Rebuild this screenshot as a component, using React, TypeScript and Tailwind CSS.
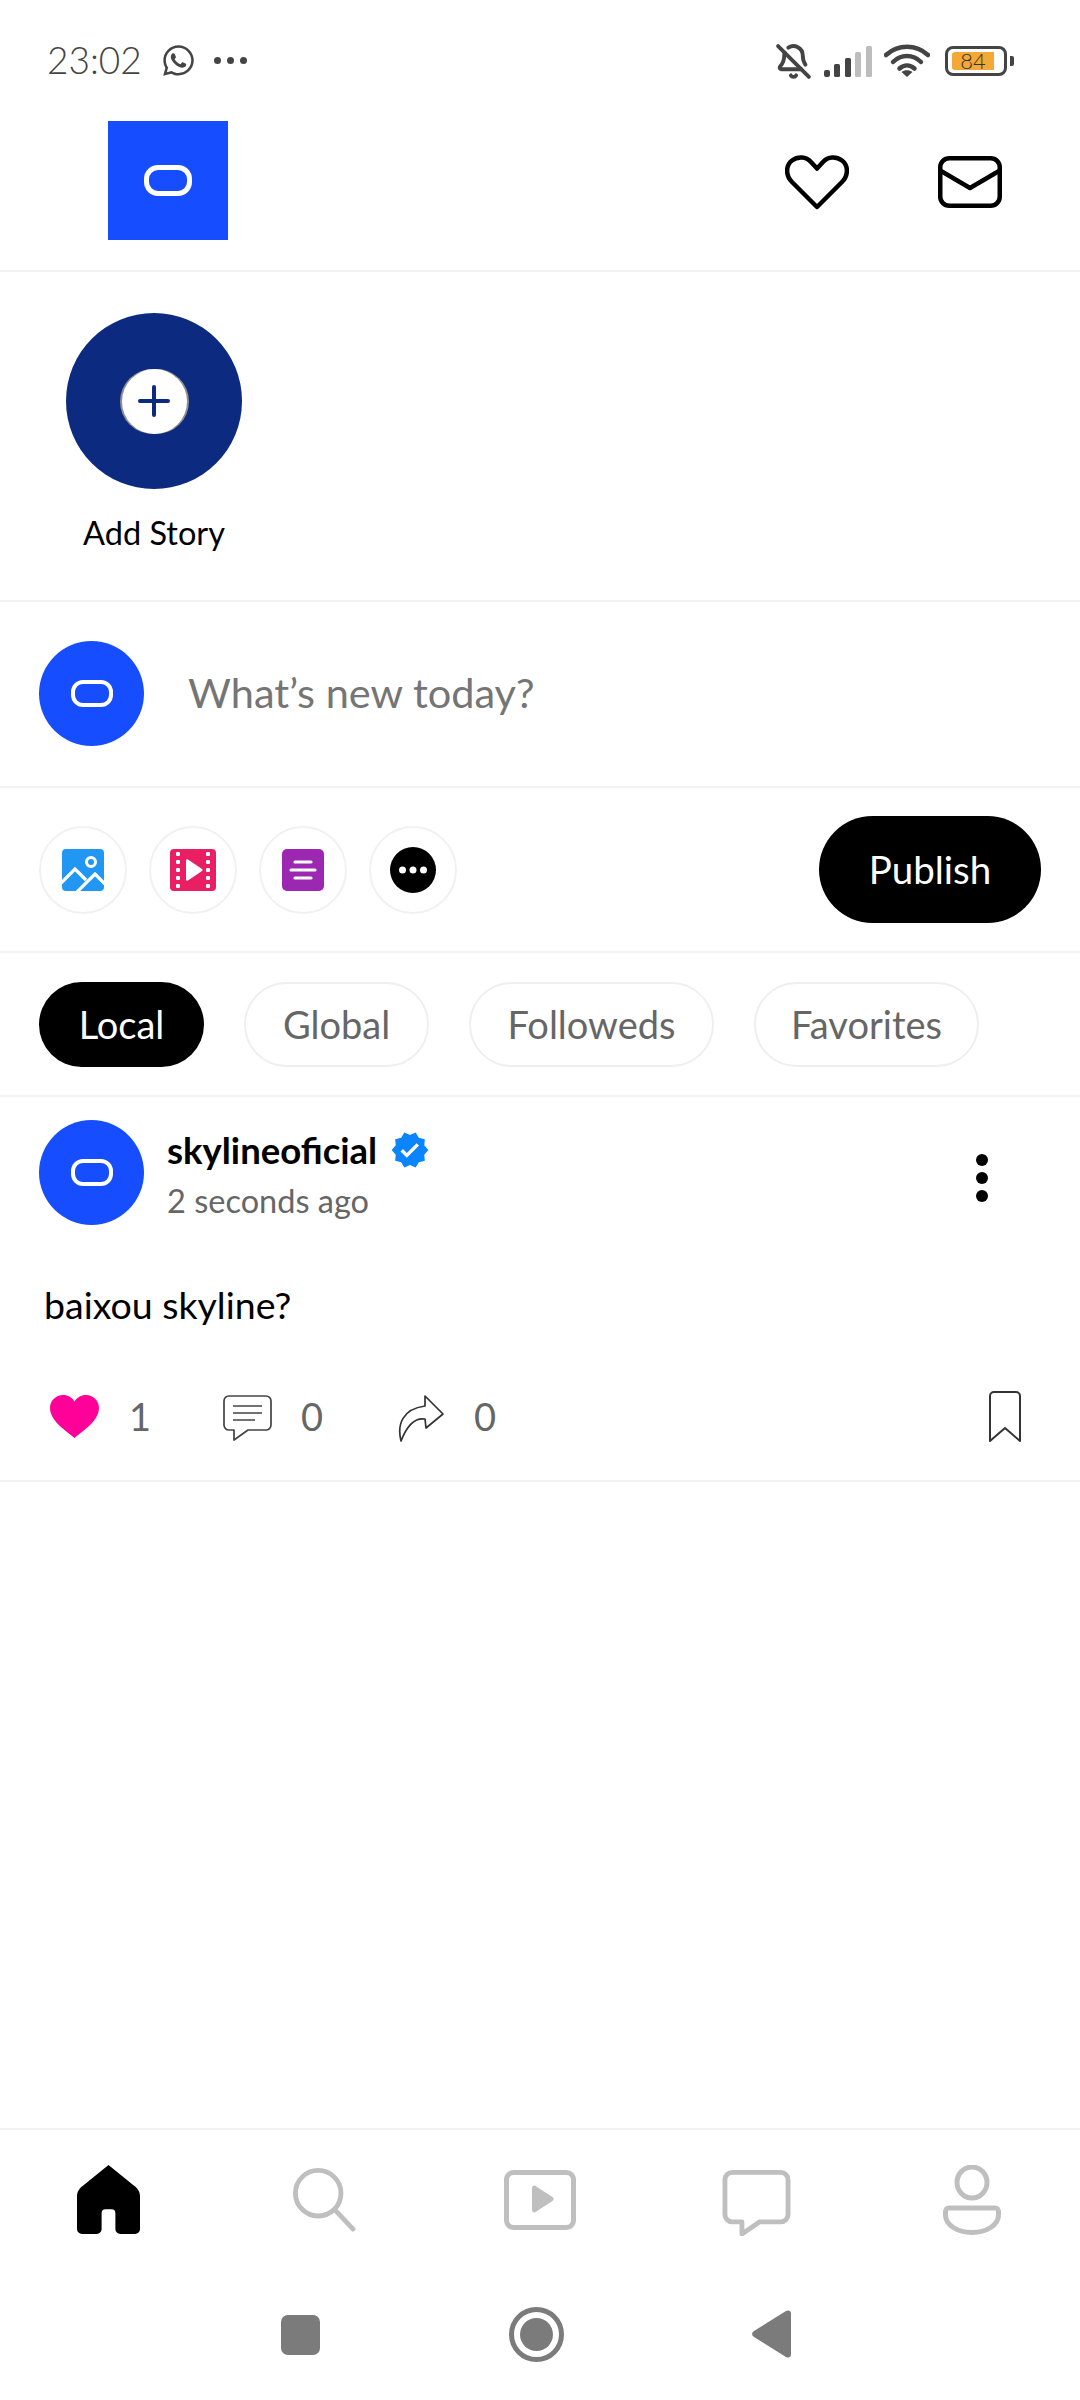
import { BellOff } from 'lucide-react';
import { FaWhatsapp } from 'react-icons/fa';
import { MdVerified } from 'react-icons/md';

const font = "font-['Lato','Noto_Sans',sans-serif]";

function Divider() {
  return <div className="h-[2px] bg-[#f3f3f3]" />;
}

function LogoMark({ big }: { big?: boolean }) {
  return big ? (
    <div className="w-[48px] h-[31px] rounded-[14px] border-[5px] border-white" />
  ) : (
    <div className="w-[42px] h-[27px] rounded-[12px] border-[4px] border-white" />
  );
}

function Avatar() {
  return (
    <div className="w-[105px] h-[105px] rounded-full bg-[#154dff] flex items-center justify-center shrink-0">
      <LogoMark />
    </div>
  );
}

function StatusBar() {
  return (
    <div className="h-[121px] flex items-start pt-[43px] pl-[47px] pr-[66px] text-[#444]">
      <span className="text-[37px] leading-[34px] font-light w-[94px]">23:02</span>
      <FaWhatsapp className="ml-[20px] w-[35px] h-[35px]" />
      <div className="ml-[18px] mt-[14px] flex gap-[6px]">
        <div className="w-[7px] h-[7px] rounded-full bg-[#444]" />
        <div className="w-[7px] h-[7px] rounded-full bg-[#444]" />
        <div className="w-[7px] h-[7px] rounded-full bg-[#444]" />
      </div>
      <div className="ml-auto flex items-center gap-[12px] h-[36px]">
        <BellOff className="w-[37px] h-[37px]" strokeWidth={2.5} />
        <svg width="48" height="32" viewBox="0 0 48 32">
          <rect x="0" y="25" width="6" height="7" rx="2" fill="#444" />
          <rect x="10" y="19" width="6" height="13" rx="1.5" fill="#444" />
          <rect x="21" y="13" width="6" height="19" rx="1.5" fill="#444" />
          <rect x="31" y="7" width="6" height="25" rx="1.5" fill="#bdbdbd" />
          <rect x="42" y="1" width="6" height="31" rx="1.5" fill="#bdbdbd" />
        </svg>
        <svg width="46" height="34" viewBox="0 0 46 34" fill="none" stroke="#444" strokeWidth="4.5" strokeLinecap="round">
          <path d="M2 11C14 0 32 0 44 11" />
          <path d="M9 18C17 10 29 10 37 18" />
          <path d="M15.5 24.5C20 20.5 26 20.5 30.5 24.5" />
          <path d="M23 33l-5.5-5C20.5 25.5 25.5 25.5 28.5 28z" fill="#444" stroke="none" />
        </svg>
        <div className="flex items-center ml-[3px]">
          <div className="w-[62px] h-[30px] rounded-[8px] border-[3px] border-[#444] flex items-center pl-[4px]">
            <div className="w-[42px] h-[18px] rounded-l-[3px] bg-[#f4a836] flex items-center justify-center text-[22px] font-light leading-none text-[#333]">
              84
            </div>
          </div>
          <div className="ml-[3px] w-[4px] h-[10px] rounded-r-[2px] bg-[#444]" />
        </div>
      </div>
    </div>
  );
}

function TopBar() {
  return (
    <div className="h-[149px] flex items-start pl-[108px] pr-[78px]">
      <div className="w-[120px] h-[119px] bg-[#154dff] flex items-center justify-center">
        <LogoMark big />
      </div>
      <svg className="ml-auto mt-[33px]" width="64" height="56" viewBox="0 0 64 56" fill="none" stroke="#000" strokeWidth="4.5" strokeLinejoin="round">
        <path d="M32 53L7 28C0 21 1 11 7 6.500c6-4.500 14-4 19 1.500l6 6.500L38 8c5-5.500 13-6 19-1.500 6 4.500 7 14.500 0 21.500z" />
      </svg>
      <svg className="ml-[89px] mt-[35px]" width="64" height="52" viewBox="0 0 64 52" fill="none" stroke="#000" strokeWidth="4.5" strokeLinejoin="round">
        <rect x="2.25" y="2.25" width="59.5" height="47.5" rx="9" />
        <path d="M3 15l29 17 29-17" />
      </svg>
    </div>
  );
}

function StoryRow() {
  return (
    <div className="h-[328px] pt-[41px] pl-[66px]">
      <div className="w-[176px] flex flex-col items-center">
        <div className="w-[176px] h-[176px] rounded-full bg-[#0b2a80] flex items-center justify-center">
          <div className="w-[69px] h-[65px] rounded-full bg-[#8f8f8f] flex items-center justify-center">
            <div className="w-[65px] h-[65px] rounded-full bg-white flex items-center justify-center">
              <svg width="32" height="32" viewBox="0 0 32 32" stroke="#0b2a80" strokeWidth="4" strokeLinecap="round">
                <path d="M2 16h28M16 2v28" />
              </svg>
            </div>
          </div>
        </div>
        <span className="mt-[26px] text-[32.500px] leading-[36px] text-black whitespace-nowrap">Add Story</span>
      </div>
    </div>
  );
}

function Composer() {
  return (
    <div className="h-[184px] flex items-center pl-[39px] pb-[2px]">
      <Avatar />
      <span className="ml-[44px] text-[41.500px] text-[#757575] -mt-[2px]">What’s new today?</span>
    </div>
  );
}

function MediaButton({ children }: { children: React.ReactNode }) {
  return (
    <div className="w-[88px] h-[88px] rounded-full border-2 border-[#f1f1f1] flex items-center justify-center">
      {children}
    </div>
  );
}

function ActionsRow() {
  return (
    <div className="h-[163px] flex items-center pl-[39px] pr-[38px]">
      <div className="flex gap-[22px]">
        <MediaButton>
          <svg width="42" height="42" viewBox="0 0 42 42">
            <rect width="42" height="42" rx="4" fill="#2196f3" />
            <path d="M-1 34L13 20l11 11M14 44l19-19 10 10" fill="none" stroke="#fff" strokeWidth="3.2" />
            <circle cx="29" cy="13" r="4.5" fill="none" stroke="#fff" strokeWidth="3" />
          </svg>
        </MediaButton>
        <MediaButton>
          <svg width="46" height="42" viewBox="0 0 46 42">
            <rect width="46" height="42" rx="4" fill="#e91e63" />
            <path d="M16 11.5c0-1 1-1.600 2-1l14 9.500c.8.500.8 1.500 0 2l-14 9.500c-1 .6-2 0-2-1z" fill="#fff" />
            {[4, 12, 20, 28, 36].map((y) => (
              <g key={y} fill="#fff">
                <rect x="6" y={y - 1} width="4" height="4" rx="1" />
                <rect x="36" y={y - 1} width="4" height="4" rx="1" />
              </g>
            ))}
          </svg>
        </MediaButton>
        <MediaButton>
          <svg width="42" height="42" viewBox="0 0 42 42">
            <rect width="42" height="42" rx="5" fill="#9c27b0" />
            <path d="M13 13h16M9 21h24M13 29h16" stroke="#fff" strokeWidth="3.200" strokeLinecap="round" />
          </svg>
        </MediaButton>
        <MediaButton>
          <svg width="46" height="46" viewBox="0 0 46 46">
            <circle cx="23" cy="23" r="23" fill="#000" />
            <circle cx="12.500" cy="23" r="3.500" fill="#fff" />
            <circle cx="23" cy="23" r="3.500" fill="#fff" />
            <circle cx="33.500" cy="23" r="3.500" fill="#fff" />
          </svg>
        </MediaButton>
      </div>
      <div className="ml-auto mr-[1px] w-[222px] h-[107px] rounded-full bg-black text-white text-[38.500px] flex items-center justify-center">
        Publish
      </div>
    </div>
  );
}

function Tab({ label, active, w }: { label: string; active?: boolean; w: string }) {
  return (
    <div
      className={`h-[85px] rounded-full flex items-center justify-center text-[38px] ${w} ${
        active ? 'bg-black text-white' : 'border-2 border-[#efefef] text-[#666]'
      }`}
    >
      {label}
    </div>
  );
}

function Tabs() {
  return (
    <div className="h-[142px] flex items-center pl-[39px] gap-[40px]">
      <Tab label="Local" active w="w-[165px]" />
      <Tab label="Global" w="w-[185px]" />
      <Tab label="Followeds" w="w-[245px]" />
      <Tab label="Favorites" w="w-[225px]" />
    </div>
  );
}

function Post() {
  return (
    <div className="h-[383px] flex flex-col">
      <div className="flex pl-[39px] pr-[92px] pt-[23px]">
        <Avatar />
        <div className="ml-[23px] flex flex-col">
          <div className="flex items-center h-[56px] mt-[2px]">
            <span className="text-[36.500px] font-bold text-black leading-none">skylineoficial</span>
            <MdVerified className="ml-[13px] w-[40px] h-[40px] text-[#0a84ff]" />
          </div>
          <span className="text-[32.500px] leading-[38px] mt-[4px] text-[#666]">2 seconds ago</span>
        </div>
        <div className="ml-auto mt-[34px] flex flex-col gap-[6px]">
          <div className="w-[12px] h-[12px] rounded-full bg-black" />
          <div className="w-[12px] h-[12px] rounded-full bg-black" />
          <div className="w-[12px] h-[12px] rounded-full bg-black" />
        </div>
      </div>
      <p className="mt-[59px] pl-[44px] text-[37.500px] leading-[42px] text-black">baixou skyline?</p>
      <div className="mt-[66px] flex items-center h-[52px] pl-[50px] pr-[59px] text-[38px] text-[#666]">
        <svg className="-mt-[3px]" width="49" height="43" viewBox="0 0 49 43">
          <path d="M24.500 43C19 37.500 0 27 0 13 0 5.500 6 0 13 0c5 0 9 2.500 11.500 6.500C27 2.500 31 0 36 0c7 0 13 5.500 13 13 0 14-19 24.500-24.500 30z" fill="#ff0099" />
        </svg>
        <span className="ml-[30px] w-[19px] -mt-[3px]">1</span>
        <svg className="ml-[75px]" width="49" height="46" viewBox="0 0 49 46" fill="none" stroke="#444" strokeWidth="1.700" strokeLinejoin="round">
          <path d="M6 1h37a5 5 0 0 1 5 5v24a5 5 0 0 1-5 5H25l-14 10v-10H6a5 5 0 0 1-5-5V6a5 5 0 0 1 5-5z" />
          <path d="M10 11h29M10 18h29M10 25h22" />
        </svg>
        <span className="ml-[29px] w-[22px] -mt-[3px]">0</span>
        <svg className="ml-[75px]" width="46" height="47" viewBox="0 0 46 47" fill="none" stroke="#333" strokeWidth="1.700" strokeLinejoin="round">
          <path d="M27 1l18 18-17 14-1-9C15 22 8 33 3 46 -1 30 4 14 27 11z" />
        </svg>
        <span className="ml-[30px] w-[22px] -mt-[3px]">0</span>
        <svg className="ml-auto -mt-[3px]" width="32" height="51" viewBox="0 0 32 51" fill="none" stroke="#333" strokeWidth="2" strokeLinejoin="round">
          <path d="M5 1h22a4 4 0 0 1 4 4v45L16 37 1 50V5a4 4 0 0 1 4-4z" />
        </svg>
      </div>
    </div>
  );
}

function BottomNav() {
  return (
    <div className="grid grid-cols-5 h-[146px] pt-[35px] items-start justify-items-center">
      <svg width="63" height="69" viewBox="0 0 64 70">
        <path d="M32 0l26 21c4 3 6 6 6 11v33a5 5 0 0 1-5 5H44a5 5 0 0 1-5-5V49a4 4 0 0 0-4-4h-6a4 4 0 0 0-4 4v16a5 5 0 0 1-5 5H5a5 5 0 0 1-5-5V32c0-5 2-8 6-11z" fill="#000" />
      </svg>
      <svg className="mt-[3px]" width="64" height="64" viewBox="0 0 64 66" fill="none" stroke="#bfbfbf" strokeWidth="5" strokeLinecap="round">
        <circle cx="26" cy="26" r="23.500" />
        <path d="M44 44l18 19" />
      </svg>
      <svg className="mt-[5px]" width="72" height="60" viewBox="0 0 72 60" fill="none">
        <rect x="2.500" y="2.500" width="67" height="55" rx="7" stroke="#bfbfbf" strokeWidth="5" />
        <path d="M28 19c0-2 2-3 3.500-2l17 11c1.500 1 1.500 3 0 4l-17 11c-1.500 1-3.500 0-3.500-2z" fill="#bfbfbf" transform="translate(0 -1)" />
      </svg>
      <svg className="mt-[5px]" width="69" height="66" viewBox="0 0 70 68" fill="none" stroke="#bfbfbf" strokeWidth="5" strokeLinejoin="round">
        <path d="M10 2.500h50a7.500 7.500 0 0 1 7.500 7.500v36a7.500 7.500 0 0 1-7.500 7.500H38L20 66V53.500H10A7.500 7.500 0 0 1 2.500 46V10A7.500 7.500 0 0 1 10 2.500z" />
      </svg>
      <svg width="58" height="70" viewBox="0 0 58 70" fill="none" stroke="#bfbfbf" strokeWidth="5">
        <ellipse cx="29" cy="17.500" rx="15" ry="15.500" />
        <path d="M6 43h46a3.500 3.500 0 0 1 3.500 3.500V50c0 10-12 17.500-26.500 17.500S2.500 60 2.500 50v-3.500A3.500 3.500 0 0 1 6 43z" />
      </svg>
    </div>
  );
}

function AndroidNav() {
  return (
    <div className="h-[124px] flex items-start pl-[281px] pt-[31px]">
      <div className="mt-[8px] w-[39px] h-[40px] rounded-[7px] bg-[#7b7b7b]" />
      <div className="ml-[189px] w-[55px] h-[55px] rounded-full border-[5px] border-[#7b7b7b] flex items-center justify-center">
        <div className="w-[33px] h-[33px] rounded-full bg-[#7b7b7b]" />
      </div>
      <svg className="ml-[187px] mt-[3px]" width="40" height="48" viewBox="0 0 40 48">
        <path d="M3 21L35 1c2.500-1.500 5 0 5 2.500v41c0 2.500-2.500 4-5 2.500L3 27c-2.500-1.500-2.500-4.500 0-6z" fill="#7b7b7b" />
      </svg>
    </div>
  );
}

export default function App() {
  return (
    <div className={`w-[1080px] h-[2400px] bg-white flex flex-col overflow-hidden ${font}`}>
      <StatusBar />
      <TopBar />
      <Divider />
      <StoryRow />
      <Divider />
      <Composer />
      <Divider />
      <ActionsRow />
      <Divider />
      <Tabs />
      <Divider />
      <Post />
      <Divider />
      <div className="flex-1" />
      <Divider />
      <BottomNav />
      <AndroidNav />
    </div>
  );
}
